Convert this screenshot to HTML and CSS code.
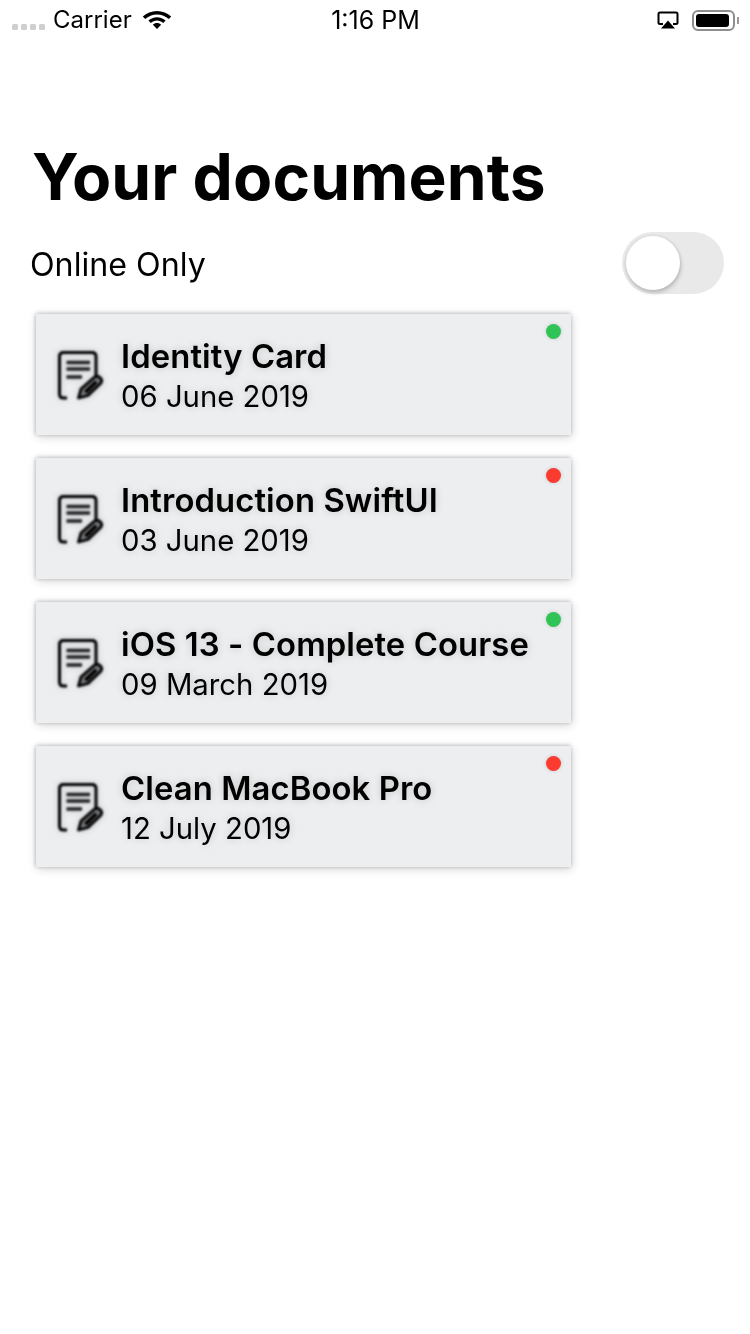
FILE: index.html
```html
<!DOCTYPE html>
<html lang="en">
<head>
<meta charset="utf-8">
<title>Your documents</title>
<link rel="stylesheet" href="styles.css">
</head>
<body>
<svg class="defs" width="0" height="0" aria-hidden="true">
  <symbol id="doc" viewBox="0 0 46 50">
    <path d="M10 48H6.500Q2.500 48 2.500 44V6.500Q2.500 2.500 6.500 2.500H35Q39 2.500 39 6.500V28" fill="none" stroke="#000" stroke-width="3"/>
    <path d="M9.500 12.500H33M9.500 19H33M9.500 27H25" fill="none" stroke="#222" stroke-width="3.400"/>
    <path d="M21.500 48L24 39L37 27.500Q40 25 43 27.500Q46 30.500 43.500 33.500L31 45.500Z" fill="#777" stroke="#000" stroke-width="2.800" stroke-linejoin="round"/>
    <path d="M27 41L38 30.500L40.500 33L30 43.500Z" fill="#000"/>
  </symbol>
</svg>
<header class="status">
  <div class="status-left">
    <span class="signal"><i></i><i></i><i></i><i></i></span>
    <span class="carrier">Carrier</span>
    <svg class="wifi" width="30" height="20" viewBox="0 0 30 20"><path d="M15 1C9.500 1 4.500 3.100 .8 6.600L3.200 9.100C6.300 6.200 10.400 4.400 15 4.400S23.700 6.200 26.800 9.100L29.200 6.600C25.500 3.100 20.500 1 15 1Z"/><path d="M15 7.200C11.700 7.200 8.700 8.500 6.400 10.600L8.800 13C10.400 11.500 12.600 10.600 15 10.600S19.600 11.500 21.200 13L23.600 10.600C21.300 8.500 18.300 7.200 15 7.200Z"/><path d="M15 13C13.400 13 12 13.600 10.900 14.700L15 19L19.100 14.700C18 13.600 16.600 13 15 13Z"/></svg>
  </div>
  <div class="clock">1:16 PM</div>
  <div class="status-right">
    <svg class="airplay" width="22" height="18" viewBox="0 0 22 18"><path d="M6 13H3Q1.500 13 1.500 11.500V3Q1.500 1.500 3 1.500H19Q20.500 1.500 20.500 3V11.500Q20.500 13 19 13H16" fill="none" stroke="#000" stroke-width="2"/><path d="M11 9.500L18 17.500H4Z"/></svg>
    <span class="battery"><span class="battery-fill"></span></span><span class="battery-cap"></span>
  </div>
</header>
<main class="page">
  <h1 class="title">Your documents</h1>
  <div class="filter">
    <span class="filter-label">Online Only</span>
    <span class="switch"><span class="knob"></span></span>
  </div>
  <ul class="cards">
    <li class="card">
      <svg class="doc" width="46" height="50"><use href="#doc"/></svg>
      <div class="text"><div class="name">Identity Card</div><div class="date">06 June 2019</div></div>
      <span class="dot green"></span>
    </li>
    <li class="card">
      <svg class="doc" width="46" height="50"><use href="#doc"/></svg>
      <div class="text"><div class="name">Introduction SwiftUI</div><div class="date">03 June 2019</div></div>
      <span class="dot red"></span>
    </li>
    <li class="card">
      <svg class="doc" width="46" height="50"><use href="#doc"/></svg>
      <div class="text"><div class="name">iOS 13 - Complete Course</div><div class="date">09 March 2019</div></div>
      <span class="dot green"></span>
    </li>
    <li class="card">
      <svg class="doc" width="46" height="50"><use href="#doc"/></svg>
      <div class="text"><div class="name">Clean MacBook Pro</div><div class="date">12 July 2019</div></div>
      <span class="dot red"></span>
    </li>
  </ul>
</main>
</body>
</html>
```
FILE: styles.css
```css
* { box-sizing: border-box; }
html, body { margin: 0; padding: 0; background: #fff; }
body { width: 750px; height: 1334px; overflow: hidden; font-family: Inter, "Liberation Sans", sans-serif; color: #000; }
.defs { display: block; height: 0; }
.status { height: 39px; display: grid; grid-template-columns: 1fr auto 1fr; align-items: center; padding: 0 11px 0 12px; filter: blur(.4px); }
.status-left { display: flex; align-items: center; }
.signal { display: flex; gap: 3px; margin-top: 15px; }
.signal i { width: 6px; height: 6px; border-radius: 1.500px; background: #cfcfcf; }
.carrier { font-size: 24px; margin-left: 8px; }
.wifi { margin-left: 10px; }
.clock { font-size: 25px; }
.status-right { display: flex; align-items: center; justify-content: flex-end; margin-top: 1px; }
.airplay { margin-right: 1px; }
.battery { width: 43px; height: 21px; border: 2px solid #8e8e8e; border-radius: 6px; padding: 2px 4px 2px 2px; margin-left: 12px; display: block; }
.battery-fill { display: block; height: 100%; background: #000; border-radius: 3px; }
.battery-cap { width: 2px; height: 7px; background: #999; margin-left: 2px; }
.page { padding: 0 26px 0 32px; }
.title { margin: 98px 0 0; font-size: 64px; line-height: 80px; font-weight: 700; letter-spacing: .1px; filter: blur(.3px); }
.filter { display: flex; align-items: center; justify-content: space-between; margin-top: 15px; height: 62px; }
.filter-label { font-size: 32.200px; margin: 2px 0 0 -2px; filter: blur(.3px); }
.switch { width: 102px; height: 62px; border-radius: 31px; background: #e9e9ea; padding: 4px; position: relative; }
.knob { display: block; width: 54px; height: 54px; border-radius: 50%; background: #fff; box-shadow: 1px 3px 4px rgba(0,0,0,.18), 0 0 0 2px rgba(0,0,0,.03); }
.cards { list-style: none; margin: 20px 0 0 4px; padding: 0; width: 535px; display: flex; flex-direction: column; gap: 23px; }
.card { position: relative; height: 121px; background: #eceef0; display: flex; align-items: center; padding: 6px 0 0 21px; gap: 18px; box-shadow: 0 -1px 4px rgba(0,0,0,.12), -1px 0 4px rgba(0,0,0,.12), 1px 2px 9px rgba(0,0,0,.17); }
.doc { flex: none; filter: blur(.8px) drop-shadow(0 0 3px rgba(0,0,0,.2)); margin-top: -6px; }
.text { display: flex; flex-direction: column; text-shadow: 0 0 8px rgba(0,0,0,.18); margin-top: -6px; }
.name { font-size: 32.800px; font-weight: 600; line-height: 44px; letter-spacing: .1px; filter: blur(.3px); }
.date { font-size: 29.300px; line-height: 37px; filter: blur(.3px); }
.dot { position: absolute; top: 10px; right: 10px; width: 15px; height: 15px; border-radius: 50%; box-shadow: 0 0 4px rgba(0,0,0,.15); }
.green { background: #2fc455; }
.red { background: #fb3a30; }
```
